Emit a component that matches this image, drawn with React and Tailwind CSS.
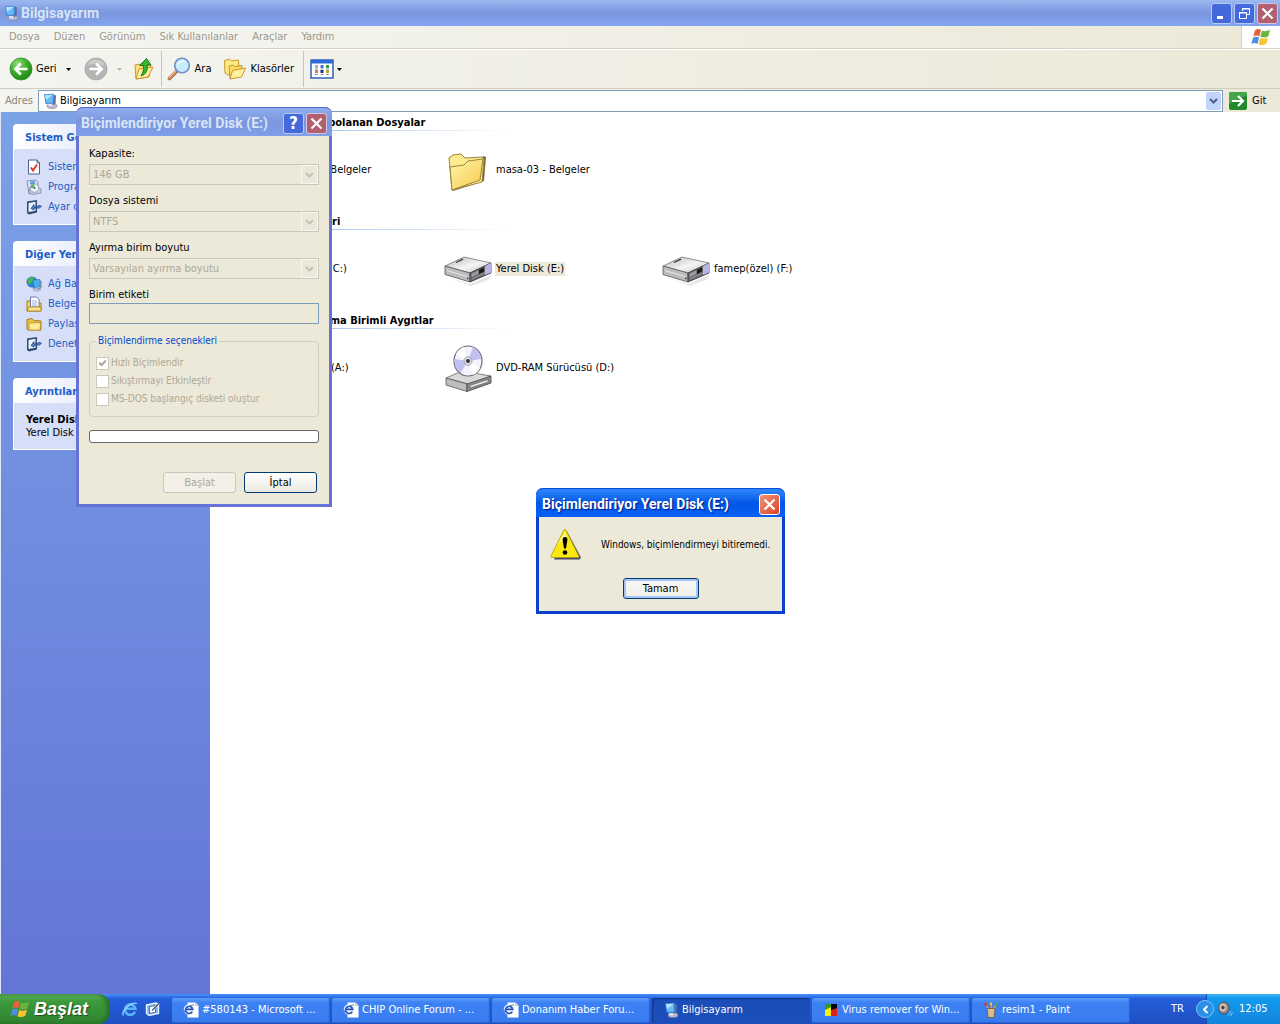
import React, { useState } from 'react';

const WindowsFlag = ({ className }) => (
  <svg className={className} viewBox="0 0 20 18" aria-hidden="true">
    <path d="M4 2.2C6 .8 8 .8 10 2L8.4 8.4C6.500 7.300 4.500 7.300 2.300 8.600Z" fill="#e8613a" />
    <path d="M11 2.400C13 3.600 15.500 3.500 19 1.800L17.300 8.200C14.500 9.700 12 9.800 9.400 8.700Z" fill="#6db33f" />
    <path d="M2 9.800C4.200 8.500 6.200 8.500 8.100 9.600L6.500 15.900C4.500 14.800 2.500 14.800.3 16.100Z" fill="#4a8fe0" />
    <path d="M9.100 10C11.500 11.100 14 11 17 9.500L15.300 15.800C12.500 17.400 10 17.400 7.500 16.200Z" fill="#f7c331" />
  </svg>
);

const ComputerIcon = ({ className = 'h-4 w-4 shrink-0' }) => (
  <svg className={className} viewBox="0 0 16 16" aria-hidden="true">
    <ellipse cx="10" cy="13" rx="5" ry="2.500" fill="#b9b9cf" stroke="#77779a" strokeWidth=".6" />
    <path d="M11.500 1.500L14 2.500L13.500 11L10.500 12Z" fill="#5d6da8" />
    <path d="M2 1.200L11.500.8L11.800 10.300L3.600 11Z" fill="#3585d8" />
    <path d="M3 2L10.700 1.700L10.900 9.400L4.400 10Z" fill="#69bdf5" />
    <path d="M3 2L10.700 1.700L4 7Z" fill="#b5e5ff" />
    <path d="M6 11h4l.6 2.200H6.500z" fill="#e3e3ef" />
  </svg>
);

const BackIcon = () => (
  <svg className="h-6 w-6" viewBox="0 0 24 24" aria-hidden="true">
    <defs>
      <radialGradient id="back" cx=".35" cy=".25" r=".8">
        <stop offset="0" stopColor="#8fe07a" />
        <stop offset=".5" stopColor="#3fae2d" />
        <stop offset="1" stopColor="#1d8510" />
      </radialGradient>
    </defs>
    <circle cx="12" cy="12" r="11" fill="url(#back)" stroke="#2f8a2a" strokeWidth=".8" />
    <path d="M18.500 12H7M11.800 6.500L6.300 12L11.800 17.500" fill="none" stroke="#fff" strokeWidth="2.600" />
  </svg>
);

const ForwardIcon = () => (
  <svg className="h-6 w-6" viewBox="0 0 24 24" aria-hidden="true">
    <circle cx="12" cy="12" r="11" fill="#b4b4b4" stroke="#a3a3a3" strokeWidth=".8" />
    <path d="M3 9a9.500 9.500 0 0 1 18 0c-6-3-12-3-18 0z" fill="#cbcbcb" />
    <path d="M5.500 12H17M12.200 6.500L17.700 12L12.200 17.500" fill="none" stroke="#fff" strokeWidth="2.600" />
  </svg>
);

const UpFolderIcon = () => (
  <svg className="h-6 w-6" viewBox="0 0 24 24" aria-hidden="true">
    <path d="M3 8l5-1 2 2 9-1-2 12-13 2z" fill="#fbe27a" stroke="#c9992a" />
    <path d="M4 22l3-10 14-2-5 10z" fill="#fdf0a4" stroke="#c9992a" />
    <path d="M9 19C14.500 17 16 13 15 8h4L14.500 1.500 7.500 8.500h4c.6 4-.5 7-2.500 10.500z" fill="#37b52f" stroke="#137412" strokeWidth=".9" />
  </svg>
);

const SearchIcon = () => (
  <svg className="h-6 w-6" viewBox="0 0 24 24" aria-hidden="true">
    <path d="M9.500 14.500L2.500 21.500" stroke="#b87850" strokeWidth="3.800" strokeLinecap="round" />
    <path d="M8.500 14.500L2.500 20.500" stroke="#f0b78c" strokeWidth="1.200" strokeLinecap="round" />
    <circle cx="15" cy="8.500" r="7.300" fill="#c8ecfb" stroke="#6f8fd0" strokeWidth="1.600" />
    <path d="M10.500 8a5 5 0 0 1 8-3.500c-4 0-6 1-8 3.500z" fill="#fff" />
  </svg>
);

const FoldersIcon = () => (
  <svg className="h-6 w-6" viewBox="0 0 24 24" aria-hidden="true">
    <path d="M1.500 3.500l5-1.500 2 2 7-1 .5 11-11 4-3-2z" fill="#fde78a" stroke="#c9992a" />
    <path d="M6 9l4-1 1.500 1.500L19 8.500l-1 10-11 3z" fill="#fbd95f" stroke="#c9992a" />
    <path d="M7 22l2.500-8.500L22.500 11l-4 9z" fill="#fef0a0" stroke="#c9992a" />
  </svg>
);

const ViewsIcon = () => (
  <svg className="h-5 w-6" viewBox="0 0 24 20" aria-hidden="true">
    <rect x="1" y="1" width="22" height="18" fill="#fff" stroke="#2257b8" strokeWidth="1.400" />
    <rect x="1" y="1" width="22" height="3.500" fill="#2a6ad8" />
    <g>
      <rect x="5" y="6" width="3" height="3" fill="#a9adc4" />
      <rect x="10.500" y="6" width="3" height="3" fill="#4672c6" />
      <rect x="16" y="6" width="3" height="3" fill="#3b9a3b" />
      <rect x="5" y="11" width="3" height="3" fill="#d8795b" />
      <rect x="10.500" y="11" width="3" height="3" fill="#222f7c" />
      <rect x="16" y="11" width="3" height="3" fill="#c3a02e" />
      <path d="M5 10h3M10.500 10h3M16 10h3M5 15.500h3M10.500 15.500h3M16 15.500h3" stroke="#8c93a8" />
    </g>
  </svg>
);

const Caret = ({ color = '#000' }) => (
  <svg className="h-[3px] w-[5px]" viewBox="0 0 5 3" aria-hidden="true">
    <path d="M0 0h5L2.500 3z" fill={color} />
  </svg>
);

const Chevron = ({ color }) => (
  <svg className="h-[6px] w-[9px]" viewBox="0 0 9 6" aria-hidden="true">
    <path d="M1 1l3.500 3.500L8 1" fill="none" stroke={color} strokeWidth="2" />
  </svg>
);

const CloseGlyph = () => (
  <svg className="h-[13px] w-[13px]" viewBox="0 0 13 13" aria-hidden="true">
    <path d="M1.500 1.500l10 10M11.500 1.500l-10 10" stroke="#fff" strokeWidth="2.200" />
  </svg>
);

const FolderIcon = () => (
  <svg className="h-12 w-12" viewBox="0 0 48 48" aria-hidden="true">
    <defs>
      <linearGradient id="folder" x1="0" y1="0" x2="1" y2="1">
        <stop offset="0" stopColor="#fff6ad" />
        <stop offset="1" stopColor="#f6c94a" />
      </linearGradient>
    </defs>
    <path d="M9 45l31-10 2-24-3-1-3 24-28 10z" fill="#77693a" />
    <path d="M5 12l4-3 8-1 4 4 17-1 2 2-2 23-30 8z" fill="#fdeb90" stroke="#9c8338" />
    <path d="M6 21l14-2 4-4 15-2-3 21-28 10z" fill="url(#folder)" stroke="#9c8338" />
  </svg>
);

const DriveIcon = () => (
  <svg className="h-12 w-12" viewBox="0 0 48 48" aria-hidden="true">
    <defs>
      <linearGradient id="driveTop" x1="0" y1="0" x2="1" y2="1">
        <stop offset="0" stopColor="#b5b5b5" />
        <stop offset=".55" stopColor="#f5f5f5" />
        <stop offset="1" stopColor="#b9b9b9" />
      </linearGradient>
    </defs>
    <path d="M6 33l20 6 22-9-4 5-17 6z" fill="#e6e6e6" />
    <path d="M1 21L20 12l27 6-21 10z" fill="url(#driveTop)" stroke="#777" strokeWidth=".8" />
    <path d="M1 21l25 7v9L1 29.500z" fill="#bcbcbc" stroke="#555" strokeWidth=".8" />
    <path d="M26 28l21-10v10L26 37z" fill="#6a6a70" stroke="#333" strokeWidth=".8" />
    <path d="M41 21l6-3v9.500l-6 2.500z" fill="#b9b6e6" />
    <path d="M35 25l5-2.400v4L35 29z" fill="#17171c" />
    <path d="M28 29l6-3v2.500l-6 3zM28 34l13-6" fill="#95959a" stroke="#ababaf" strokeWidth=".7" />
    <path d="M12 17.500l7-3.300" stroke="#3a3a3a" strokeWidth="1.300" />
    <path d="M3 25.500l20 6" stroke="#e8e8e8" strokeWidth="1" />
    <path d="M23 33.500h1.500" stroke="#2a5a2a" strokeWidth="1.500" />
  </svg>
);

const DvdIcon = () => (
  <svg className="h-12 w-12" viewBox="0 0 48 48" aria-hidden="true">
    <path d="M2 34L18 27l29 5-19 9z" fill="#d9d9d9" stroke="#666" strokeWidth=".8" />
    <path d="M2 34l21 6v7.500L2 41z" fill="#bdbdbd" stroke="#555" strokeWidth=".8" />
    <path d="M23 40l24-8v7l-24 8.500z" fill="#8a8a8a" stroke="#444" strokeWidth=".8" />
    <path d="M26 41.500l18-6v2.500l-18 6z" fill="#f0f0f0" stroke="#555" strokeWidth=".6" />
    <ellipse cx="24" cy="17" rx="14" ry="15" fill="#f3f2fd" stroke="#6b6b78" strokeWidth="1.200" />
    <path d="M24 17L12 10a14 15 0 0 1 8-7zM24 17l12 7a14 15 0 0 1-7 7z" fill="#fff" />
    <path d="M24 17L10.500 15a14 15 0 0 0 6 14zM24 17l5-14a14 15 0 0 1 8 12z" fill="#c3c0f4" />
    <ellipse cx="24" cy="17" rx="4" ry="4.300" fill="#dddde8" stroke="#90909c" strokeWidth=".8" />
    <circle cx="24" cy="17" r="2" fill="#33333b" />
  </svg>
);

const FloppyIcon = () => (
  <svg className="h-12 w-12" viewBox="0 0 48 48" aria-hidden="true">
    <path d="M8 8h32v32H8z" fill="#3a5fae" />
    <path d="M14 8h20v14H14z" fill="#eee" />
  </svg>
);

const WarningIcon = () => (
  <svg className="h-8 w-8 shrink-0" viewBox="0 0 32 32" aria-hidden="true">
    <path d="M17 2.500L31 28.500L29.500 30.500H4z" fill="#4a4668" />
    <path d="M14 .8Q15 0 16 1.200L29 27.500Q29 28.500 28 28.500H2Q.5 28.500 1 27z" fill="#fbe80c" stroke="#a89c14" strokeWidth=".8" />
    <path d="M15 2.500L7 17C11 12 14 10 17 10z" fill="#fff79a" />
    <path d="M12.600 10.500a2.400 2.400 0 0 1 4.800 0L16 19.500h-2z" fill="#000" />
    <circle cx="15" cy="23.500" r="2.300" fill="#000" />
  </svg>
);

const TaskIcon = ({ kind }) => (
  <svg className="h-4 w-4 shrink-0" viewBox="0 0 16 16" aria-hidden="true">
    {kind === 'info' && (
      <>
        <path d="M2.500 1h8.500l2.500 2.500V15H2.500z" fill="#fff" stroke="#4b5f96" />
        <path d="M11 1v3h3" fill="none" stroke="#4b5f96" />
        <path d="M5 8.500l2 3 4-6" fill="none" stroke="#df3b25" strokeWidth="2" />
      </>
    )}
    {kind === 'programs' && (
      <>
        <path d="M1 2l9-1 2 3-1 10-8 1z" fill="#e8ebf5" stroke="#8390ad" />
        <path d="M4 2.500l5-.5v3l-5 .5z" fill="#5c9fe0" />
        <path d="M4 8h8l3 2v4l-8 1.500-4-2z" fill="#c6cede" stroke="#7f8bab" strokeWidth=".8" />
        <circle cx="8.500" cy="9" r="4.300" fill="#eef3fa" stroke="#8291b8" strokeWidth=".8" />
        <path d="M8.500 9V5a4 4 0 0 0-3.900 4z" fill="#5fb768" />
        <circle cx="8.500" cy="9" r="1.100" fill="#4c5f90" />
      </>
    )}
    {kind === 'settings' && (
      <>
        <path d="M1 2.500L11 1v12.500L3 15.500l-2-1.500z" fill="#2f4a78" />
        <path d="M2.500 4l7-1.200v9L2.500 13z" fill="#e6f3fd" />
        <path d="M5 9.500l3-4v2.300h3l2-1.500 2.500 1-2 1.700H8v2z" fill="#4c86d8" stroke="#1f3b66" strokeWidth=".7" />
      </>
    )}
    {kind === 'network' && (
      <>
        <path d="M6 6l9-1v7l-7 2z" fill="#a9bbdc" stroke="#6a7db0" />
        <ellipse cx="11" cy="14" rx="4" ry="1.500" fill="#b5b7d2" />
        <circle cx="6" cy="6" r="5.500" fill="#2f7cd3" />
        <path d="M2 3c3-3 6-2 6 0s-2 3-4 5-2-1-2-5z" fill="#43b854" />
        <path d="M7 4l7-.5v7L8 11.500z" fill="#45b2ec" stroke="#2d70b8" strokeWidth=".6" />
      </>
    )}
    {kind === 'docs' && (
      <>
        <path d="M1 5h5l1 2h8v8H1z" fill="#f3cd57" stroke="#a37d1e" />
        <path d="M4.500 1h6l2.500 2.500V11h-8.500z" fill="#fff" stroke="#6c7ba6" />
        <path d="M6 5h5M6 7h5M6 9h5" stroke="#7f9ad0" strokeWidth=".8" />
        <path d="M1 15l2-4h12v4z" fill="#fbe388" stroke="#a37d1e" strokeWidth=".8" />
      </>
    )}
    {kind === 'folder' && (
      <>
        <path d="M1 3.500L6 2.500l2 2 7 .5v9H2.500L1 13z" fill="#efc13f" stroke="#a37d1e" />
        <path d="M3 7l10-.5 1.500 1-.5 6.500H3z" fill="#fdeb95" stroke="#b98f2a" strokeWidth=".8" />
      </>
    )}
  </svg>
);

const IePageIcon = () => (
  <svg className="h-4 w-4 shrink-0" viewBox="0 0 16 16" aria-hidden="true">
    <path d="M4.500 .5h8L15.500 3.500V15.500H4.500z" fill="#fff" />
    <path d="M12.500.5v3h3" fill="#ddd" stroke="#a8a898" strokeWidth=".6" />
    <circle cx="6" cy="7.500" r="5.200" fill="#fff" />
    <path d="M9.300 9.600A3.600 3.600 0 1 1 9.700 7.400H3" fill="none" stroke="#1c4fb8" strokeWidth="1.700" />
    <path d="M1.300 12C-.5 9.500 7 1.500 11 3.200" fill="none" stroke="#3a78dc" strokeWidth="1" />
  </svg>
);

const IeIcon = () => (
  <svg className="h-4 w-4" viewBox="0 0 16 16" aria-hidden="true">
    <path d="M13 10.800A5.200 5.200 0 1 1 13.400 7.800H4.500" fill="none" stroke="#58b6f8" strokeWidth="2.600" />
    <path d="M1.500 14.500C-1.500 10 10 .5 15 2.500" fill="none" stroke="#9bd8ff" strokeWidth="1.300" />
  </svg>
);

const DesktopIcon = () => (
  <svg className="h-4 w-4" viewBox="0 0 16 16" aria-hidden="true">
    <path d="M1.500 4l9.500-2 2.500 1.500v9L4 14.500l-2.500-2z" fill="#7fb2f0" stroke="#e9f3ff" strokeWidth="1.400" />
    <path d="M4.500 5.500l6-.8v6.600l-6 1z" fill="#fff" stroke="#35578f" strokeWidth=".8" />
    <path d="M7 9.500L14 2.500" stroke="#fff" strokeWidth="2.200" />
    <path d="M7 9.500L14 2.500" stroke="#304a78" strokeWidth="1.100" />
  </svg>
);

const VirusIcon = () => (
  <svg className="h-4 w-4 shrink-0" viewBox="0 0 16 16" aria-hidden="true">
    <path d="M2 2h6v6H2z" fill="#2f9a1d" />
    <path d="M8 2h6v6H8z" fill="#000" />
    <path d="M2 8l6-3v9H2z" fill="#f5ee1a" />
    <path d="M8 8h6v6H8z" fill="#d8241c" />
    <path d="M8 8l6-2v2z" fill="#d8241c" />
  </svg>
);

const PaintIcon = () => (
  <svg className="h-4 w-4 shrink-0" viewBox="0 0 16 16" aria-hidden="true">
    <path d="M6 9L3 2M8 9V1M10 9l3-7" stroke="#d9a35a" strokeWidth="1.500" />
    <path d="M3.500 4L2 1" stroke="#d33" strokeWidth="2.200" />
    <path d="M8 3V.5" stroke="#eed23c" strokeWidth="2.200" />
    <path d="M12.500 4l1.300-3" stroke="#4aa84a" strokeWidth="2.200" />
    <path d="M4 6.500h8L11 15.500H5z" fill="#d9bd8e" stroke="#70583a" strokeWidth=".8" />
  </svg>
);

const SpeakerIcon = () => (
  <svg className="h-4 w-4" viewBox="0 0 16 16" aria-hidden="true">
    <ellipse cx="7" cy="7" rx="5.500" ry="6" fill="#85807e" stroke="#4a4a55" strokeWidth=".8" />
    <ellipse cx="6" cy="6.500" rx="3.600" ry="4.200" fill="#c9bdb4" />
    <circle cx="6" cy="6.500" r="1.700" fill="#4c3b36" />
    <path d="M11 14.500l3-4.500M13.500 15l2-3.500" stroke="#8fc8ff" strokeWidth="1" />
  </svg>
);

const menus = ['Dosya', 'Düzen', 'Görünüm', 'Sık Kullanılanlar', 'Araçlar', 'Yardım'];

const taskPanels = [
  {
    title: 'Sistem Görevleri',
    items: [
      { kind: 'info', label: 'Sistem bilgisi' },
      { kind: 'programs', label: 'Program ekle' },
      { kind: 'settings', label: 'Ayar değiştir' },
    ],
  },
  {
    title: 'Diğer Yerler',
    items: [
      { kind: 'network', label: 'Ağ Bağlantılarım' },
      { kind: 'docs', label: 'Belgelerim' },
      { kind: 'folder', label: 'Paylaşılan Belgeler' },
      { kind: 'settings', label: 'Denetim Masası' },
    ],
  },
];

const groups = [
  {
    title: 'Bu Bilgisayarda Depolanan Dosyalar',
    items: [
      { icon: FolderIcon, label: 'Paylaşılan Belgeler' },
      { icon: FolderIcon, label: 'masa-03 - Belgeler' },
    ],
  },
  {
    title: 'Sabit Disk Sürücüleri',
    items: [
      { icon: DriveIcon, label: 'Yerel Disk (C:)' },
      { icon: DriveIcon, label: 'Yerel Disk (E:)', selected: true },
      { icon: DriveIcon, label: 'famep(özel) (F:)' },
    ],
  },
  {
    title: 'Çıkarılabilir Depolama Birimli Aygıtlar',
    items: [
      { icon: FloppyIcon, label: '3½ Disket (A:)' },
      { icon: DvdIcon, label: 'DVD-RAM Sürücüsü (D:)' },
    ],
  },
];

const tasks = [
  { icon: IePageIcon, label: '#580143 - Microsoft ...' },
  { icon: IePageIcon, label: 'CHIP Online Forum - ...' },
  { icon: IePageIcon, label: 'Donanım Haber Foru...' },
  { icon: ComputerIcon, label: 'Bilgisayarım', active: true },
  { icon: VirusIcon, label: 'Virus remover for Win...' },
  { icon: PaintIcon, label: 'resim1 - Paint' },
];

const captionButton = 'flex h-[21px] w-[21px] items-center justify-center rounded-[3px] border';
const captionTitle = "flex-1 whitespace-nowrap font-['Roboto',sans-serif] text-[14px] font-bold leading-4";

const TitleBar = () => (
  <header className="flex h-[26px] shrink-0 items-center bg-gradient-to-b from-[#9db9f0] via-[#7a96df] to-[#83a6ef] pl-[3px] pr-[2px]">
    <ComputerIcon />
    <h1 className={`ml-[2px] text-[#d8e4f8] ${captionTitle}`}>Bilgisayarım</h1>
    <div className="flex gap-[2px]">
      <button aria-label="Simge durumuna küçült" className={`${captionButton} border-[#b5c9f5] bg-[#4469dd]`}>
        <svg className="h-[13px] w-[13px]" viewBox="0 0 13 13"><path d="M2 9h6v3H2z" fill="#fff" /></svg>
      </button>
      <button aria-label="Önceki boyut" className={`${captionButton} border-[#b5c9f5] bg-[#4469dd]`}>
        <svg className="h-[13px] w-[13px]" viewBox="0 0 13 13" fill="none" stroke="#fff">
          <path d="M4.500 4V1.500h7v6H9M4 2h8M1.500 5.500h7v6h-7zM1 6h8" />
        </svg>
      </button>
      <button aria-label="Kapat" className={`${captionButton} border-[#d9c4dc] bg-[#b0606f]`}>
        <CloseGlyph />
      </button>
    </div>
  </header>
);

const MenuBar = () => (
  <nav className="flex h-[23px] shrink-0 items-center border-b border-[#d5d2c3] bg-gradient-to-r from-[#f5f5f2] to-[#ece9d8]">
    <div className="flex flex-1 pl-[2px]">
      {menus.map((menu) => (
        <button key={menu} className="px-[7px] text-[#9b988c]">{menu}</button>
      ))}
    </div>
    <div className="flex h-full w-[39px] items-center justify-center border-l border-[#d5d2c3] bg-white">
      <WindowsFlag className="h-[18px] w-5" />
    </div>
  </nav>
);

const Toolbar = () => (
  <div className="flex h-10 shrink-0 items-center border-b border-t border-b-[#d0cdbe] border-t-white bg-gradient-to-r from-[#f4f4f0] to-[#ece9d8] pl-[9px]">
    <button className="flex items-center gap-[3px]"><BackIcon />Geri</button>
    <button aria-label="Geri geçmişi" className="ml-[9px]"><Caret /></button>
    <button aria-label="İleri" className="ml-[13px]"><ForwardIcon /></button>
    <button aria-label="İleri geçmişi" className="ml-[9px]"><Caret color="#b9b6a8" /></button>
    <button aria-label="Yukarı" className="ml-[10px]"><UpFolderIcon /></button>
    <div className="ml-[5px] h-9 w-px bg-[#c9c6b8]" />
    <button className="ml-[5px] flex items-center gap-[4px]"><SearchIcon />Ara</button>
    <button className="ml-[12px] flex items-center gap-[3px]"><FoldersIcon />Klasörler</button>
    <div className="ml-[9px] h-9 w-px bg-[#c9c6b8]" />
    <button aria-label="Görünümler" className="ml-[6px] flex items-center gap-[3px]"><ViewsIcon /><Caret /></button>
  </div>
);

const AddressBar = () => {
  const [address, setAddress] = useState('Bilgisayarım');

  return (
    <form className="flex h-[23px] shrink-0 items-center bg-gradient-to-r from-[#f4f4f0] to-[#ece9d8] pl-[5px]" onSubmit={(e) => e.preventDefault()}>
      <label htmlFor="address" className="w-[33px] text-[#8a887c]">Adres</label>
      <div className="flex h-[22px] flex-1 items-center border border-[#7f9db9] bg-white pl-[3px] pr-px">
        <ComputerIcon />
        <input
          id="address"
          value={address}
          onChange={(e) => setAddress(e.target.value)}
          className="ml-[2px] flex-1 outline-none"
        />
        <button type="button" aria-label="Adres listesi" className="flex h-[18px] w-[15px] items-center justify-center rounded-[2px] bg-[#c2d3fc]">
          <Chevron color="#4d6185" />
        </button>
      </div>
      <button type="submit" className="flex w-[57px] items-center gap-[5px] pl-[6px]">
        <svg className="h-[18px] w-[18px]" viewBox="0 0 18 18" aria-hidden="true">
          <rect width="18" height="18" rx="2" fill="#238a2c" />
          <path d="M0 2a2 2 0 0 1 2-2h14a2 2 0 0 1 2 2v1L0 12z" fill="#45a648" />
          <path d="M3 9h11M9 4l5 5-5 5" fill="none" stroke="#fff" strokeWidth="2.200" />
        </svg>
        Git
      </button>
    </form>
  );
};

const PanelTitle = ({ children }) => (
  <h2 className="flex h-[25px] items-center rounded-t-[4px] bg-gradient-to-r from-white to-[#c6d3f7] pl-3 pt-[2px] font-bold text-[#215dc6]">{children}</h2>
);

const Sidebar = () => (
  <aside className="w-[210px] shrink-0 space-y-4 border-l border-[#e3e8f8] bg-gradient-to-b from-[#7ba2e7] to-[#6375d6] px-3 py-3">
    {taskPanels.map((panel) => (
      <section key={panel.title}>
        <PanelTitle>{panel.title}</PanelTitle>
        <ul className="border border-t-0 border-white bg-[#d6dff7] pb-[7px] pl-3 pt-2">
          {panel.items.map((item) => (
            <li key={item.label}>
              <a href="#" className="flex h-5 items-center gap-[6px] text-[#215dc6]">
                <TaskIcon kind={item.kind} />
                {item.label}
              </a>
            </li>
          ))}
        </ul>
      </section>
    ))}
    <section>
      <PanelTitle>Ayrıntılar</PanelTitle>
      <div className="border border-t-0 border-white bg-[#d6dff7] pb-[10px] pl-3 pt-[10px] leading-[13px]">
        <p className="font-bold">Yerel Disk (E:)</p>
        <p>Yerel Disk</p>
      </div>
    </section>
  </aside>
);

const FileView = () => (
  <main className="min-w-0 flex-1 bg-white">
    {groups.map((group) => (
      <section key={group.title} className="pb-[17px]">
        <h2 className="flex h-[18px] items-center pl-[13px] pt-[3px] font-bold">{group.title}</h2>
        <div className="h-px w-[300px] bg-gradient-to-r from-[#70a5e0] to-white" />
        <div className="flex flex-wrap pl-4 pt-[15px]">
          {group.items.map(({ icon: Icon, label, selected }) => (
            <button key={label} className="flex w-[218px] items-center gap-[3px] text-left">
              <Icon />
              <span className={selected ? 'bg-[#ece9d8] px-px' : 'px-px'}>{label}</span>
            </button>
          ))}
        </div>
      </section>
    ))}
  </main>
);

const SelectField = ({ id, label, value }) => (
  <div className="mb-[7px]">
    <label htmlFor={id} className="mb-[2px] block pt-px leading-4">{label}</label>
    <div className="relative">
      <select id={id} disabled className="block h-[21px] w-full appearance-none border border-[#c9c7ba] bg-[#ece9d8] pl-[3px] text-[#aca899] opacity-100">
        <option>{value}</option>
      </select>
      <span className="pointer-events-none absolute right-px top-px flex h-[19px] w-[17px] items-center justify-center border border-[#f8f7f2] bg-[#ebe8da]">
        <Chevron color="#c5c2b2" />
      </span>
    </div>
  </div>
);

const CheckOption = ({ label, checked }) => (
  <label className="flex h-[18px] items-center gap-[2px] text-[#aca899]">
    <span className="relative flex h-[13px] w-[13px]">
      <input type="checkbox" disabled defaultChecked={checked} className="h-[13px] w-[13px] appearance-none border border-[#cac8bb] bg-white" />
      {checked && (
        <svg className="absolute left-[3px] top-[3px] h-[7px] w-[7px]" viewBox="0 0 7 7" aria-hidden="true">
          <path d="M0 2.500l2.500 2.500L7 .5" fill="none" stroke="#aca899" strokeWidth="2" />
        </svg>
      )}
    </span>
    {label}
  </label>
);

const FormatDialog = () => (
  <div role="dialog" aria-labelledby="format-title" className="absolute left-[76px] top-[107px] flex w-[256px] flex-col rounded-t-[7px] border-[3px] border-t-0 border-[#6672d6] bg-[#ece9d8]">
    <div className="-mx-[3px] flex h-[29px] items-center rounded-t-[7px] border-t border-[#5565c8] bg-gradient-to-b from-[#8fadee] via-[#7a96df] to-[#7f9fea] pl-[5px] pr-[5px] pt-[2px]">
      <h2 id="format-title" className={`text-[#d8e4f8] ${captionTitle}`}>Biçimlendiriyor Yerel Disk (E:)</h2>
      <div className="flex gap-[2px]">
        <button aria-label="Yardım" className={`${captionButton} border-[#b5c9f5] bg-[#4469dd] text-[17px] font-bold text-white`}>?</button>
        <button aria-label="Kapat" className={`${captionButton} border-[#d9c4dc] bg-[#b0606f]`}><CloseGlyph /></button>
      </div>
    </div>
    <div className="px-[10px] pb-[11px] pt-[9px]">
      <SelectField id="capacity" label="Kapasite:" value="146 GB" />
      <SelectField id="filesystem" label="Dosya sistemi" value="NTFS" />
      <SelectField id="allocation" label="Ayırma birim boyutu" value="Varsayılan ayırma boyutu" />
      <label htmlFor="volume" className="block pt-px leading-4">Birim etiketi</label>
      <input id="volume" disabled className="block h-[21px] w-full border border-[#7f9db9] bg-[#ece9d8]" />
      <fieldset className="mt-[9px] rounded-[4px] border border-[#d0d0bf] px-[6px] pb-2 pt-[5px] text-[10px]">
        <legend className="px-[2px] leading-4 text-[#0046d5]">Biçimlendirme seçenekleri</legend>
        <CheckOption label="Hızlı Biçimlendir" checked />
        <CheckOption label="Sıkıştırmayı Etkinleştir" />
        <CheckOption label="MS-DOS başlangıç disketi oluştur" />
      </fieldset>
      <div role="progressbar" aria-label="İlerleme" className="mt-[13px] h-[13px] rounded-[3px] border border-[#686868] bg-white" />
      <div className="mt-[29px] flex justify-end gap-2 pr-[2px]">
        <button disabled className="h-[21px] w-[73px] rounded-[3px] border border-[#c9c7ba] bg-[#f3f1e7] text-[#aca899]">Başlat</button>
        <button className="h-[21px] w-[73px] rounded-[3px] border border-[#003c74] bg-gradient-to-b from-white to-[#ece9e0]">İptal</button>
      </div>
    </div>
  </div>
);

const MessageDialog = () => (
  <div role="alertdialog" aria-labelledby="message-title" className="absolute left-[536px] top-[488px] flex w-[249px] flex-col rounded-t-[7px] border-[3px] border-t-0 border-[#0a3fd0] bg-[#ece9d8]">
    <div className="-mx-[3px] flex h-[29px] items-center rounded-t-[7px] border-t border-[#0a4fd8] bg-gradient-to-b from-[#2f86fb] via-[#0257e6] to-[#0560f5] pl-[6px] pr-[5px] pt-[2px]">
      <h2 id="message-title" className={`text-white [text-shadow:1px_1px_1px_#0a1883] ${captionTitle}`}>Biçimlendiriyor Yerel Disk (E:)</h2>
      <button aria-label="Kapat" className={`${captionButton} border-white bg-gradient-to-br from-[#f0917a] to-[#d8411c]`}><CloseGlyph /></button>
    </div>
    <div className="flex flex-col items-center pb-3 pt-3">
      <div className="flex w-full pl-[11px]">
        <WarningIcon />
        <p className="ml-[19px] flex h-8 items-center whitespace-nowrap pb-px text-[10px]">Windows, biçimlendirmeyi bitiremedi.</p>
      </div>
      <button className="mt-[17px] h-[21px] w-[76px] rounded-[3px] border border-[#003c74] bg-gradient-to-b from-[#f8f9fc] to-[#f0eee4] shadow-[inset_0_0_0_2px_#a9c3f0]">Tamam</button>
    </div>
  </div>
);

const Taskbar = () => (
  <footer className="flex h-[30px] shrink-0 items-stretch overflow-hidden bg-gradient-to-b from-[#4a93f7] via-[#245edc] via-15% to-[#1f4fc0] text-white">
    <button className="flex w-[110px] items-center gap-[4px] rounded-r-[12px] bg-gradient-to-b from-[#5fb35c] via-[#3c9a3c] via-25% to-[#2f822f] pl-[10px] shadow-[inset_-3px_0_4px_#256a25]">
      <WindowsFlag className="h-[18px] w-5" />
      <span className="font-['Liberation_Sans',sans-serif] text-[18px] font-bold italic leading-5 [text-shadow:1px_1px_1px_#1c4a1c]">Başlat</span>
    </button>
    <div className="flex w-[62px] items-center gap-[7px] pl-3">
      <button aria-label="Internet Explorer"><IeIcon /></button>
      <button aria-label="Masaüstünü göster"><DesktopIcon /></button>
    </div>
    <div className="flex min-w-0 flex-1 items-center gap-[2px] pt-[2px]">
      {tasks.map(({ icon: Icon, label, active }) => (
        <button
          key={label}
          className={`flex h-[25px] w-[158px] items-center gap-[3px] rounded-[2px] pl-[11px] text-left ${
            active
              ? 'bg-[#1b4eb8] shadow-[inset_1px_1px_2px_#0f3183]'
              : 'bg-gradient-to-b from-[#5c9bfa] via-[#3c81f3] via-20% to-[#3a7cf0] shadow-[inset_-1px_-1px_1px_#2a62d0]'
          }`}
        >
          <Icon />
          <span className="whitespace-nowrap">{label}</span>
        </button>
      ))}
    </div>
    <div className="flex items-center pr-3">TR</div>
    <div className="flex w-[84px] items-center">
      <button aria-label="Gizli simgeleri göster" className="z-10 flex h-[18px] w-[18px] items-center justify-center rounded-full border border-[#7cc4f7] bg-[#2a8fe6]">
        <svg className="h-[9px] w-[7px]" viewBox="0 0 7 9" aria-hidden="true">
          <path d="M5.500 1L2 4.500 5.500 8" fill="none" stroke="#fff" strokeWidth="2" />
        </svg>
      </button>
      <div className="-ml-2 flex h-full flex-1 items-center gap-[6px] border-l border-[#0d4fae] bg-gradient-to-b from-[#3fb4f5] via-[#129aec] via-15% to-[#1285dd] pl-[10px]">
        <SpeakerIcon />
        <time>12:05</time>
      </div>
    </div>
  </footer>
);

const App = () => {
  return (
    <div className="relative flex h-screen flex-col overflow-hidden bg-white font-['DejaVu_Sans_Condensed','DejaVu_Sans',sans-serif] text-[11px] leading-[14px] text-black">
      <TitleBar />
      <MenuBar />
      <Toolbar />
      <AddressBar />
      <div className="flex min-h-0 flex-1">
        <Sidebar />
        <FileView />
      </div>
      <Taskbar />
      <FormatDialog />
      <MessageDialog />
    </div>
  );
};

export default App;
